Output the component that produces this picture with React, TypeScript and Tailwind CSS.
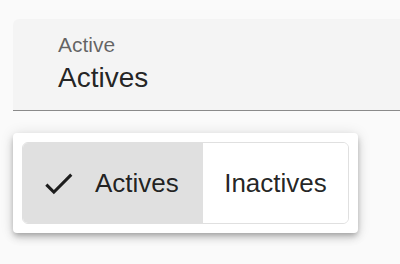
import React, { useState } from 'react';

const CheckIcon: React.FC = () => (
  <svg viewBox="0 0 24 24" className="w-[37px] h-[37px] fill-current shrink-0">
    <path d="M9 16.17 4.83 12l-1.42 1.41L9 19 21 7l-1.41-1.41z" />
  </svg>
);

const App: React.FC = () => {
  const [value, setValue] = useState<'active' | 'inactive'>('active');

  return (
    <div
      className="w-[400px] h-[264px] overflow-hidden bg-[#fafafa] pt-[19px] pl-[13px]"
      style={{ fontFamily: '"Liberation Sans", Arial, sans-serif' }}
    >
      {/* filled select field */}
      <div className="w-[420px] h-[92px] bg-[#f4f4f4] rounded-tl-[6px] border-b border-[#8a8a8a] pl-[45px] pt-[15px]">
        <div className="text-[21px] leading-[21px] text-black/60">Active</div>
        <div className="mt-[7px] text-[28px] leading-[32px] text-black/[0.87]">
          {value === 'active' ? 'Actives' : 'Inactives'}
        </div>
      </div>

      {/* dropdown with toggle buttons */}
      <div className="mt-[22px] w-[345px] h-[100px] bg-white rounded-[4px] p-[9px] shadow-[0_3px_5px_-1px_rgba(0,0,0,0.2),0_5px_8px_0_rgba(0,0,0,0.14),0_1px_14px_0_rgba(0,0,0,0.12)]">
        <div className="flex h-[82px] rounded-[6px] border border-[#e0e0e0] overflow-hidden">
          <button
            onClick={() => setValue('active')}
            className={`w-[180px] flex items-center pl-[17px] gap-[18px] text-[26px] text-black/[0.87] ${
              value === 'active' ? 'bg-[#e0e0e0]' : 'bg-white'
            }`}
          >
            <CheckIcon />
            Actives
          </button>
          <button
            onClick={() => setValue('inactive')}
            className={`flex-1 flex items-center justify-center text-[26px] text-black/[0.87] ${
              value === 'inactive' ? 'bg-[#e0e0e0]' : 'bg-white'
            }`}
          >
            Inactives
          </button>
        </div>
      </div>
    </div>
  );
};

export default App;
